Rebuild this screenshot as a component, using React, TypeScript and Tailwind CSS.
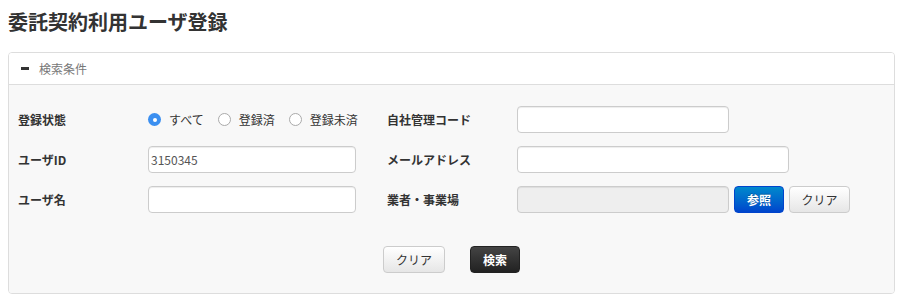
import React from "react";

const FONT = "font-['Noto_Sans_CJK_JP','Noto_Sans',sans-serif]";

function Radio({ checked, label }: { checked?: boolean; label: string }) {
  return (
    <label className="mr-[14px] flex items-center">
      {checked ? (
        <span className="flex h-[13px] w-[13px] items-center justify-center rounded-full bg-[#3b8ff0]">
          <span className="h-[4px] w-[4px] rounded-full bg-white" />
        </span>
      ) : (
        <span className="h-[13px] w-[13px] rounded-full border border-[#aaa] bg-white" />
      )}
      <span className="ml-[8px] text-[12px] text-[#333]">{label}</span>
    </label>
  );
}

function Label({ children }: { children: React.ReactNode }) {
  return (
    <div className="w-[130px] shrink-0 text-[12px] font-bold text-[#333]">
      {children}
    </div>
  );
}

const inputBase =
  "h-[27px] rounded-[4px] border border-[#ccc] pl-[2px] text-[12px] text-[#555] shadow-[inset_0_1px_1px_rgba(0,0,0,0.075)] outline-none";
const inputCls = `${inputBase} bg-white`;

export default function App() {
  return (
    <div className={`h-[302px] w-[900px] bg-white ${FONT}`}>
      {/* Title */}
      <h1 className="h-[52px] pl-[8px] pt-[8px] text-[20px] font-bold leading-[28px] text-[#333]">
        委託契約利用ユーザ登録
      </h1>

      {/* Search panel */}
      <div className="ml-[8px] w-[887px] overflow-hidden rounded-[4px] border border-[#ddd]">
        <div className="flex h-[32px] items-center border-b border-[#ddd] bg-white pl-[12px]">
          <span className="h-[3px] w-[8px] bg-[#333]" />
          <span className="ml-[10px] text-[12px] text-[#777]">検索条件</span>
        </div>

        <div className="bg-[#f8f8f8] pb-[20px] pl-[9px] pt-[21px]">
          <div className="flex flex-col gap-[13px]">
            {/* Row 1 */}
            <div className="flex h-[27px] items-center">
              <Label>登録状態</Label>
              <div className="flex w-[239px] shrink-0 items-center">
                <Radio checked label="すべて" />
                <Radio label="登録済" />
                <Radio label="登録未済" />
              </div>
              <Label>自社管理コード</Label>
              <input className={`${inputCls} w-[212px]`} />
            </div>

            {/* Row 2 */}
            <div className="flex h-[27px] items-center">
              <Label>ユーザID</Label>
              <div className="w-[239px] shrink-0">
                <input className={`${inputCls} w-[208px]`} defaultValue="3150345" />
              </div>
              <Label>メールアドレス</Label>
              <input className={`${inputCls} w-[272px]`} />
            </div>

            {/* Row 3 */}
            <div className="flex h-[27px] items-center">
              <Label>ユーザ名</Label>
              <div className="w-[239px] shrink-0">
                <input className={`${inputCls} w-[208px]`} />
              </div>
              <Label>業者・事業場</Label>
              <input
                disabled
                className={`${inputBase} w-[212px] cursor-not-allowed bg-[#eee]`}
              />
              <button className="ml-[5px] h-[27px] w-[50px] rounded-[4px] border border-[#04c] bg-gradient-to-b from-[#08c] to-[#04c] text-[12px] font-bold text-white [text-shadow:0_-1px_0_rgba(0,0,0,0.25)]">
                参照
              </button>
              <button className="ml-[5px] h-[27px] w-[61px] rounded-[4px] border border-[#ccc] bg-gradient-to-b from-white to-[#e6e6e6] text-[12px] text-[#333]">
                クリア
              </button>
            </div>
          </div>

          {/* Actions */}
          <div className="mt-[33px] flex justify-center gap-[25px] pr-[9px]">
            <button className="h-[27px] w-[62px] rounded-[4px] border border-[#ccc] bg-gradient-to-b from-white to-[#e6e6e6] text-[12px] text-[#333]">
              クリア
            </button>
            <button className="h-[27px] w-[50px] rounded-[4px] border border-[#222] bg-gradient-to-b from-[#444] to-[#222] text-[12px] font-bold text-white">
              検索
            </button>
          </div>
        </div>
      </div>
    </div>
  );
}
